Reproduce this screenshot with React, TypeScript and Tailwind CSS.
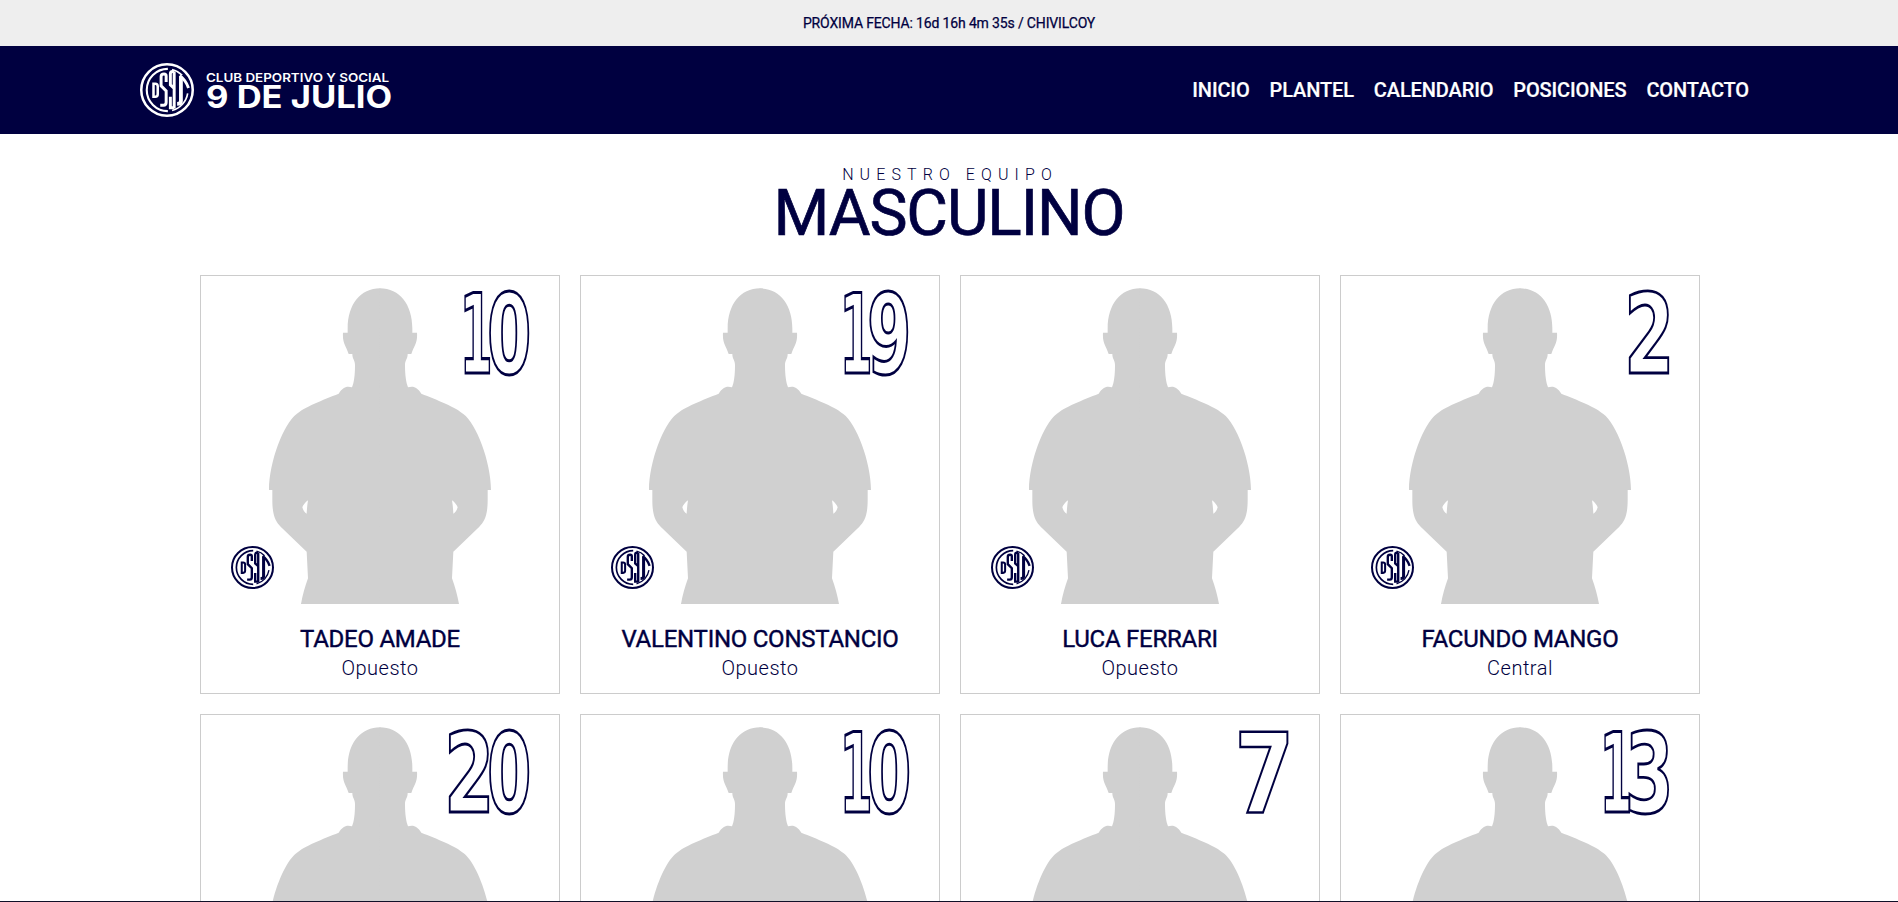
type Player = { name: string; position: string; number: string };

const players: Player[] = [
  { name: "TADEO AMADE", position: "Opuesto", number: "10" },
  { name: "VALENTINO CONSTANCIO", position: "Opuesto", number: "19" },
  { name: "LUCA FERRARI", position: "Opuesto", number: "" },
  { name: "FACUNDO MANGO", position: "Central", number: "2" },
  { name: "", position: "", number: "20" },
  { name: "", position: "", number: "10" },
  { name: "", position: "", number: "7" },
  { name: "", position: "", number: "13" },
];

const links = ["INICIO", "PLANTEL", "CALENDARIO", "POSICIONES", "CONTACTO"];

function Crest({ className }: { className: string }) {
  return (
    <svg viewBox="0 0 128 128" className={className} fill="none" stroke="currentColor" aria-hidden="true">
      <circle cx="64" cy="64" r="61" strokeWidth="6" />
      <path d="M66 14A50 50 0 1 0 66 114" strokeWidth="5" />
      <path d="M76 15.500A50 50 0 0 1 100 29M76 112.500A50 50 0 0 0 113 72" strokeWidth="4" />
      <path d="M32 49V80H36Q42 80 42 74V55Q42 49 36 49Z" strokeWidth="6" />
      <path d="M62 45V31Q62 26 57 26Q50 26 50 32V54L62 66V93Q62 100 56 100H48" strokeWidth="7" />
      <path d="M81 20V108M81 60L72 52V26Q72 20 77 20H81M72 80V106H81" strokeWidth="7" />
      <path d="M94 30Q108 40 115 59" strokeWidth="7" />
      <path d="M97 32V90Q97 97 88 97" strokeWidth="9" />
    </svg>
  );
}

function Silhouette() {
  const half =
    "M571 70C510 70 473 120 473 190V203H459C457 235 467 240 476 267H487C487 282 495 286 495 300C495 330 492 352 486 367C468 362 458 368 446 386C400 404 340 428 320 447C282 474 237 590 237 675H247V705C247 752 257 770 272 785L350 860L354 940C345 965 338 990 333 1017H571Z";
  const gap = "M354 706C346 712 339 720 337 727C340 736 344 743 350 746Q351 724 354 706Z";
  return (
    <svg viewBox="33 33 1074 984" className="block h-[328px] w-[358px]" aria-hidden="true">
      <g fill="#d0d0d0">
        <path d={half} />
        <path d={half} transform="translate(1140 0) scale(-1 1)" />
      </g>
      <g fill="#fff">
        <path d={gap} />
        <path d={gap} transform="translate(1140 0) scale(-1 1)" />
      </g>
    </svg>
  );
}

const digitCell: Record<string, string> = { "1": "w-[25px]", "7": "w-[49px]" };
const digitStyle: Record<string, string> = {
  "0": "scale-x-[0.58] [-webkit-text-stroke:3px_#000040]",
  "1": "scale-x-[0.43] [-webkit-text-stroke:3.2px_#000040]",
  "2": "scale-x-[0.66] [-webkit-text-stroke:2.8px_#000040]",
  "3": "scale-x-[0.64] [-webkit-text-stroke:2.8px_#000040]",
  "7": "scale-x-[0.78] [-webkit-text-stroke:2.5px_#000040]",
  "9": "scale-x-[0.58] [-webkit-text-stroke:3px_#000040]",
};

function Digit({ value }: { value: string }) {
  return (
    <span className={`flex justify-center ${digitCell[value] ?? "w-[40px]"}`}>
      <span className={`block ${digitStyle[value]}`}>{value}</span>
    </span>
  );
}

function Card({ player }: { player: Player }) {
  return (
    <article className="relative h-[419px] border border-[#ccc] bg-white text-center">
      <Silhouette />
      <div className="absolute top-[16px] right-[30px] flex font-['DejaVu_Sans',sans-serif] text-[110px] leading-[86px] font-bold text-white">
        {player.number.split("").map((d, i) => (
          <Digit key={i} value={d} />
        ))}
      </div>
      <Crest className="absolute top-[270px] left-[30px] size-[43px]" />
      <h3 className="mt-[20px] text-2xl leading-[30px] font-normal tracking-[-0.25px] [-webkit-text-stroke:0.4px_currentColor]">
        {player.name}
      </h3>
      <p className="text-xl leading-[28px] font-light tracking-[0.5px]">{player.position}</p>
    </article>
  );
}

export default function App() {
  return (
    <div className="h-[902px] overflow-hidden border-b border-[#101028] bg-white font-['Roboto',sans-serif] text-[#000040]">
      <div className="flex h-[46px] items-center justify-center bg-[#eee] text-sm tracking-[-0.15px] [-webkit-text-stroke:0.25px_currentColor]">
        PRÓXIMA FECHA: 16d 16h 4m 35s / CHIVILCOY
      </div>
      <header className="flex h-[88px] items-center justify-between bg-[#000040] pr-[149px] pl-[140px] text-white">
        <div className="flex items-center gap-[12px]">
          <Crest className="size-[54px]" />
          <div className="origin-left scale-x-[1.115] font-['Inter',sans-serif] whitespace-nowrap">
            <div className="text-[12px] leading-[14px] font-semibold">CLUB DEPORTIVO Y SOCIAL</div>
            <div className="text-[31px] leading-[24px] font-bold">9 DE JULIO</div>
          </div>
        </div>
        <nav className="flex gap-5 text-xl font-medium tracking-[-0.13px] [-webkit-text-stroke:0.2px_currentColor]">
          {links.map((l) => (
            <a key={l}>{l}</a>
          ))}
        </nav>
      </header>
      <main>
        <div className="pt-[31px] text-center">
          <p className="pl-[2px] text-base leading-5 font-light tracking-[6.1px]">NUESTRO EQUIPO</p>
          <h1 className="pt-px text-[64px] leading-[56px] font-normal tracking-[-1.1px] [-webkit-text-stroke:0.7px_currentColor]">
            MASCULINO
          </h1>
        </div>
        <section className="mx-auto mt-[33px] grid w-[1502px] grid-cols-[repeat(4,360px)] gap-5 pl-[2px]">
          {players.map((p, i) => (
            <Card key={i} player={p} />
          ))}
        </section>
      </main>
    </div>
  );
}
